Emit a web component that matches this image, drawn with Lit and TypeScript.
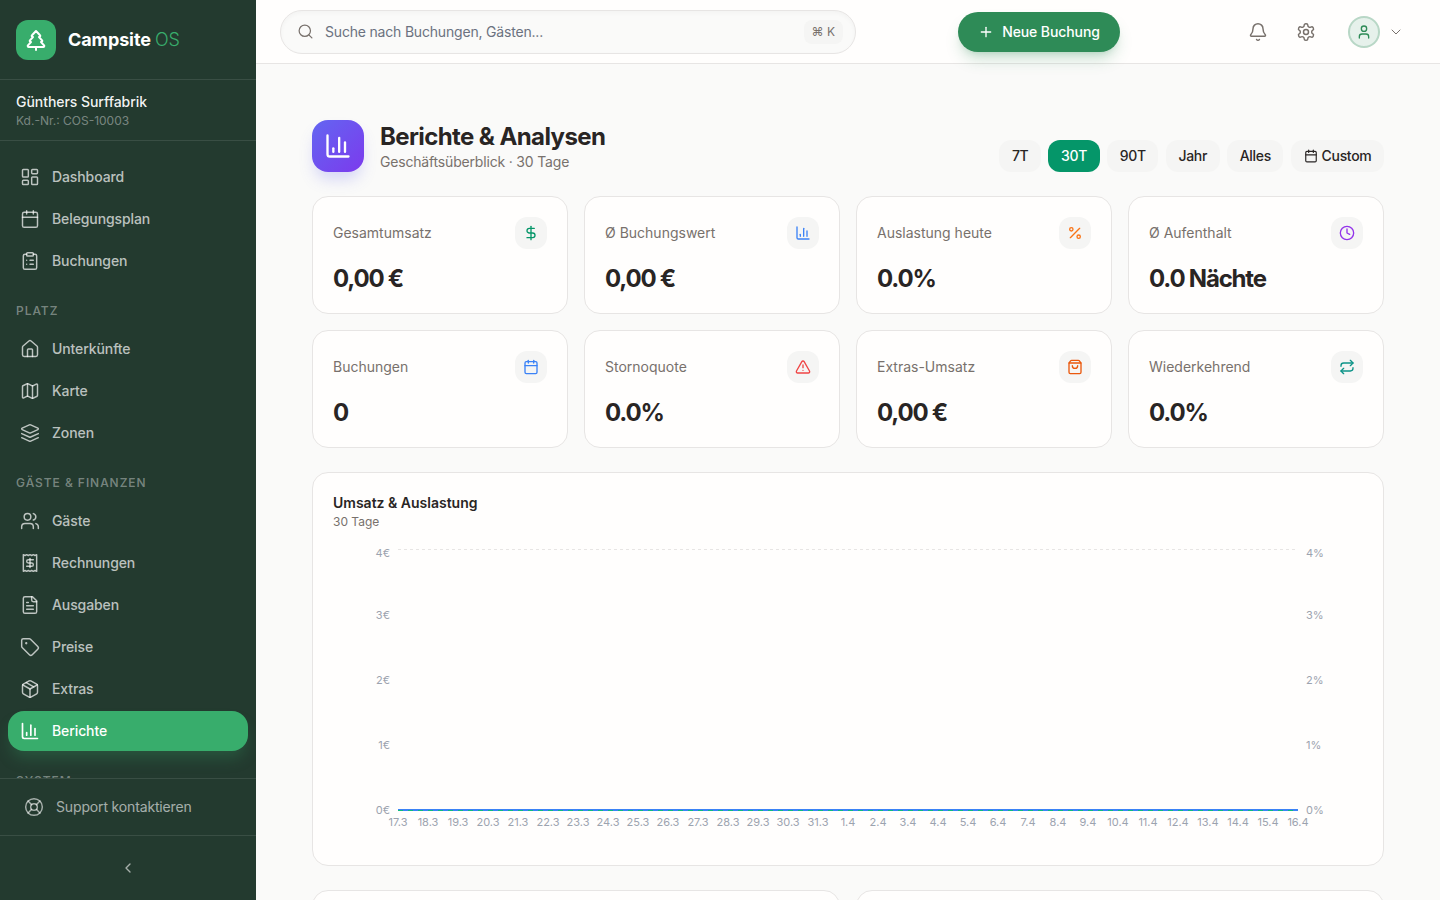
import { LitElement, html, css, svg, nothing } from 'lit';
import { customElement, state } from 'lit/decorators.js';
import { classMap } from 'lit/directives/class-map.js';

const icons: Record<string, unknown> = {
  dashboard: svg`<rect x="3" y="3" width="7" height="9" rx="1"/><rect x="14" y="3" width="7" height="5" rx="1"/><rect x="14" y="12" width="7" height="9" rx="1"/><rect x="3" y="16" width="7" height="5" rx="1"/>`,
  calendar: svg`<path d="M8 2v4"/><path d="M16 2v4"/><rect x="3" y="4" width="18" height="18" rx="2"/><path d="M3 10h18"/>`,
  clipboard: svg`<rect x="8" y="2" width="8" height="4" rx="1" ry="1"/><path d="M16 4h2a2 2 0 0 1 2 2v14a2 2 0 0 1-2 2H6a2 2 0 0 1-2-2V6a2 2 0 0 1 2-2h2"/><path d="M12 11h4"/><path d="M12 16h4"/><path d="M8 11h.01"/><path d="M8 16h.01"/>`,
  home: svg`<path d="M15 21v-8a1 1 0 0 0-1-1h-4a1 1 0 0 0-1 1v8"/><path d="M3 10a2 2 0 0 1 .709-1.528l7-5.999a2 2 0 0 1 2.582 0l7 5.999A2 2 0 0 1 21 10v9a2 2 0 0 1-2 2H5a2 2 0 0 1-2-2z"/>`,
  map: svg`<path d="M14.106 5.553a2 2 0 0 0 1.788 0l3.659-1.83A1 1 0 0 1 21 4.619v12.764a1 1 0 0 1-.553.894l-4.553 2.277a2 2 0 0 1-1.788 0l-4.212-2.106a2 2 0 0 0-1.788 0l-3.659 1.83A1 1 0 0 1 3 19.381V6.618a1 1 0 0 1 .553-.894l4.553-2.277a2 2 0 0 1 1.788 0z"/><path d="M15 5.764v15"/><path d="M9 3.236v15"/>`,
  layers: svg`<path d="M12.83 2.18a2 2 0 0 0-1.66 0L2.6 6.08a1 1 0 0 0 0 1.83l8.58 3.91a2 2 0 0 0 1.66 0l8.58-3.9a1 1 0 0 0 0-1.83Z"/><path d="M22 17.65l-9.17 4.16a2 2 0 0 1-1.66 0L2 17.65"/><path d="M22 12.65l-9.17 4.16a2 2 0 0 1-1.66 0L2 12.65"/>`,
  users: svg`<path d="M16 21v-2a4 4 0 0 0-4-4H6a4 4 0 0 0-4 4v2"/><circle cx="9" cy="7" r="4"/><path d="M22 21v-2a4 4 0 0 0-3-3.87"/><path d="M16 3.13a4 4 0 0 1 0 7.75"/>`,
  receipt: svg`<path d="M4 2v20l2-1 2 1 2-1 2 1 2-1 2 1 2-1 2 1V2l-2 1-2-1-2 1-2-1-2 1-2-1-2 1Z"/><path d="M16 8h-6a2 2 0 1 0 0 4h4a2 2 0 1 1 0 4H8"/><path d="M12 17.5v-11"/>`,
  file: svg`<path d="M15 2H6a2 2 0 0 0-2 2v16a2 2 0 0 0 2 2h12a2 2 0 0 0 2-2V7Z"/><path d="M14 2v4a2 2 0 0 0 2 2h4"/><path d="M10 9H8"/><path d="M16 13H8"/><path d="M16 17H8"/>`,
  tag: svg`<path d="M12.586 2.586A2 2 0 0 0 11.172 2H4a2 2 0 0 0-2 2v7.172a2 2 0 0 0 .586 1.414l8.704 8.704a2.426 2.426 0 0 0 3.42 0l6.58-6.58a2.426 2.426 0 0 0 0-3.42z"/><circle cx="7.5" cy="7.5" r=".5" fill="currentColor"/>`,
  package: svg`<path d="M11 21.73a2 2 0 0 0 2 0l7-4A2 2 0 0 0 21 16V8a2 2 0 0 0-1-1.73l-7-4a2 2 0 0 0-2 0l-7 4A2 2 0 0 0 3 8v8a2 2 0 0 0 1 1.73z"/><path d="M12 22V12"/><path d="M3.29 7 12 12l8.71-5"/><path d="M7.5 4.27l9 5.15"/>`,
  chart: svg`<path d="M3 3v16a2 2 0 0 0 2 2h16"/><path d="M18 17V9"/><path d="M13 17V5"/><path d="M8 17v-3"/>`,
  buoy: svg`<circle cx="12" cy="12" r="10"/><path d="m4.93 4.93 4.24 4.24"/><path d="m14.83 9.17 4.24-4.24"/><path d="m14.83 14.83 4.24 4.24"/><path d="m9.17 14.83-4.24 4.24"/><circle cx="12" cy="12" r="4"/>`,
  left: svg`<path d="m15 18-6-6 6-6"/>`,
  down: svg`<path d="m6 9 6 6 6-6"/>`,
  search: svg`<path d="m21 21-4.3-4.3"/><circle cx="11" cy="11" r="8"/>`,
  plus: svg`<path d="M5 12h14"/><path d="M12 5v14"/>`,
  bell: svg`<path d="M10.268 21a2 2 0 0 0 3.464 0"/><path d="M3.262 15.326A1 1 0 0 0 4 17h16a1 1 0 0 0 .74-1.673C19.41 13.956 18 12.499 18 8A6 6 0 0 0 6 8c0 4.499-1.411 5.956-2.738 7.326"/>`,
  gear: svg`<path d="M12.22 2h-.44a2 2 0 0 0-2 2v.18a2 2 0 0 1-1 1.73l-.43.25a2 2 0 0 1-2 0l-.15-.08a2 2 0 0 0-2.73.73l-.22.38a2 2 0 0 0 .73 2.73l.15.1a2 2 0 0 1 1 1.72v.51a2 2 0 0 1-1 1.74l-.15.09a2 2 0 0 0-.73 2.73l.22.38a2 2 0 0 0 2.73.73l.15-.08a2 2 0 0 1 2 0l.43.25a2 2 0 0 1 1 1.73V20a2 2 0 0 0 2 2h.44a2 2 0 0 0 2-2v-.18a2 2 0 0 1 1-1.73l.43-.25a2 2 0 0 1 2 0l.15.08a2 2 0 0 0 2.73-.73l.22-.39a2 2 0 0 0-.73-2.73l-.15-.08a2 2 0 0 1-1-1.74v-.5a2 2 0 0 1 1-1.74l.15-.09a2 2 0 0 0 .73-2.73l-.22-.38a2 2 0 0 0-2.73-.73l-.15.08a2 2 0 0 1-2 0l-.43-.25a2 2 0 0 1-1-1.73V4a2 2 0 0 0-2-2z"/><circle cx="12" cy="12" r="3"/>`,
  user: svg`<path d="M19 21v-2a4 4 0 0 0-4-4H9a4 4 0 0 0-4 4v2"/><circle cx="12" cy="7" r="4"/>`,
  dollar: svg`<line x1="12" x2="12" y1="2" y2="22"/><path d="M17 5H9.5a3.5 3.5 0 0 0 0 7h5a3.5 3.5 0 0 1 0 7H6"/>`,
  percent: svg`<line x1="19" x2="5" y1="5" y2="19"/><circle cx="6.5" cy="6.5" r="2.5"/><circle cx="17.5" cy="17.5" r="2.5"/>`,
  clock: svg`<circle cx="12" cy="12" r="10"/><polyline points="12 6 12 12 16 14"/>`,
  alert: svg`<path d="m21.73 18-8-14a2 2 0 0 0-3.48 0l-8 14A2 2 0 0 0 4 21h16a2 2 0 0 0 1.73-3"/><path d="M12 9v4"/><path d="M12 17h.01"/>`,
  bag: svg`<path d="M16 10a4 4 0 0 1-8 0"/><path d="M3.103 6.034h17.794"/><path d="M3.4 5.467a2 2 0 0 0-.4 1.2V20a2 2 0 0 0 2 2h14a2 2 0 0 0 2-2V6.667a2 2 0 0 0-.4-1.2l-2.1-2.8A2 2 0 0 0 17 2H7a2 2 0 0 0-1.6.8z"/>`,
  repeat: svg`<path d="m17 2 4 4-4 4"/><path d="M3 11v-1a4 4 0 0 1 4-4h14"/><path d="m7 22-4-4 4-4"/><path d="M21 13v1a4 4 0 0 1-4 4H3"/>`,
  tree: svg`<path d="m17 14 3 3.3a1 1 0 0 1-.7 1.7H4.7a1 1 0 0 1-.7-1.7L7 14h-.3a1 1 0 0 1-.7-1.7L9 9h-.2A1 1 0 0 1 8 7.3L12 3l4 4.3a1 1 0 0 1-.8 1.7H15l3 3.3a1 1 0 0 1-.7 1.7H17Z"/><path d="M12 22v-3"/>`,
};

const icon = (name: string, size = 20, width = 2) => html`<svg
  class="icon"
  width=${size}
  height=${size}
  viewBox="0 0 24 24"
  fill="none"
  stroke="currentColor"
  stroke-width=${width}
  stroke-linecap="round"
  stroke-linejoin="round"
>${icons[name]}</svg>`;

const navGroups = [
  {
    title: '',
    items: [
      ['dashboard', 'Dashboard'],
      ['calendar', 'Belegungsplan'],
      ['clipboard', 'Buchungen'],
    ],
  },
  {
    title: 'Platz',
    items: [
      ['home', 'Unterkünfte'],
      ['map', 'Karte'],
      ['layers', 'Zonen'],
    ],
  },
  {
    title: 'Gäste & Finanzen',
    items: [
      ['users', 'Gäste'],
      ['receipt', 'Rechnungen'],
      ['file', 'Ausgaben'],
      ['tag', 'Preise'],
      ['package', 'Extras'],
      ['chart', 'Berichte'],
    ],
  },
];

const kpis = [
  { label: 'Gesamtumsatz', value: '0,00 €', icon: 'dollar', tone: 'green' },
  { label: 'Ø Buchungswert', value: '0,00 €', icon: 'chart', tone: 'blue' },
  { label: 'Auslastung heute', value: '0.0%', icon: 'percent', tone: 'amber' },
  { label: 'Ø Aufenthalt', value: '0.0 Nächte', icon: 'clock', tone: 'violet' },
  { label: 'Buchungen', value: '0', icon: 'calendar', tone: 'blue' },
  { label: 'Stornoquote', value: '0.0%', icon: 'alert', tone: 'red' },
  { label: 'Extras-Umsatz', value: '0,00 €', icon: 'bag', tone: 'orange' },
  { label: 'Wiederkehrend', value: '0.0%', icon: 'repeat', tone: 'teal' },
];

const ranges = ['7T', '30T', '90T', 'Jahr', 'Alles'];

const days = [
  ...Array.from({ length: 15 }, (_, i) => `${17 + i}.3`),
  ...Array.from({ length: 16 }, (_, i) => `${1 + i}.4`),
];

const yTicks = [
  [553, '4'],
  [615, '3'],
  [680, '2'],
  [745, '1'],
  [810, '0'],
] as const;

@customElement('app-root')
export class AppRoot extends LitElement {
  @state() range = '30T';

  static styles = css`
    :host {
      display: block;
      height: 900px;
      overflow: hidden;
      font-family: Inter, 'Noto Sans', sans-serif;
      color: #292524;
    }
    .icon {
      display: block;
      flex: none;
    }
    .app {
      display: flex;
      height: 900px;
      background: #fafaf9;
    }

    .sidebar {
      width: 256px;
      flex: none;
      display: flex;
      flex-direction: column;
      background: #233a2f;
      color: #fff;
    }
    .brand {
      height: 80px;
      box-sizing: border-box;
      flex: none;
      display: flex;
      align-items: center;
      gap: 12px;
      padding: 0 16px;
      border-bottom: 1px solid rgba(255, 255, 255, 0.1);
    }
    .logo {
      width: 40px;
      height: 40px;
      border-radius: 12px;
      background: #38ad6c;
      display: flex;
      align-items: center;
      justify-content: center;
    }
    .brand-name {
      font-size: 18px;
      font-weight: 700;
      letter-spacing: -0.1px;
    }
    .brand-name span {
      font-weight: 300;
      color: #38ad6c;
    }
    .customer {
      height: 61px;
      box-sizing: border-box;
      flex: none;
      padding: 12px 16px;
      border-bottom: 1px solid rgba(255, 255, 255, 0.1);
    }
    .customer-name {
      font-size: 14px;
      line-height: 20px;
      font-weight: 500;
      letter-spacing: -0.05px;
      color: rgba(255, 255, 255, 0.95);
    }
    .customer-id {
      margin-top: 1px;
      font-size: 12px;
      line-height: 16px;
      color: rgba(255, 255, 255, 0.4);
    }
    .nav {
      flex: 1;
      min-height: 0;
      overflow: hidden;
      padding: 16px 8px 0;
    }
    .nav-group {
      margin-bottom: 22px;
    }
    .nav-title {
      height: 16px;
      line-height: 16px;
      margin-bottom: 10px;
      padding: 0 8px;
      font-size: 12px;
      font-weight: 500;
      letter-spacing: 0.96px;
      text-transform: uppercase;
      color: rgba(255, 255, 255, 0.4);
    }
    .nav-clipped {
      height: 40px;
    }
    .nav-list {
      display: flex;
      flex-direction: column;
      gap: 2px;
    }
    .nav-item {
      height: 40px;
      display: flex;
      align-items: center;
      gap: 12px;
      padding: 0 12px;
      border-radius: 16px;
      font-size: 14px;
      font-weight: 500;
      letter-spacing: -0.1px;
      color: rgba(255, 255, 255, 0.7);
    }
    .nav-item span {
      padding-bottom: 2px;
    }
    .nav-item.active {
      background: #38ad6c;
      color: #fff;
      box-shadow: 0 10px 15px -3px rgba(56, 173, 108, 0.25);
    }
    .support {
      height: 58px;
      box-sizing: border-box;
      flex: none;
      display: flex;
      align-items: center;
      gap: 12px;
      padding: 0 24px;
      border-top: 1px solid rgba(255, 255, 255, 0.1);
      border-bottom: 1px solid rgba(255, 255, 255, 0.1);
      font-size: 14px;
      letter-spacing: -0.15px;
      color: rgba(255, 255, 255, 0.6);
    }
    .support span {
      padding-bottom: 2px;
    }
    .collapse {
      height: 64px;
      flex: none;
      display: flex;
      align-items: center;
      justify-content: center;
      color: rgba(255, 255, 255, 0.6);
    }

    .body {
      flex: 1;
      min-width: 0;
      display: flex;
      flex-direction: column;
    }
    .topbar {
      height: 64px;
      box-sizing: border-box;
      flex: none;
      display: flex;
      align-items: center;
      padding: 0 24px;
      background: #fffefd;
      border-bottom: 1px solid #e7e5e4;
    }
    .search {
      width: 576px;
      height: 44px;
      box-sizing: border-box;
      display: flex;
      align-items: center;
      gap: 11px;
      padding: 0 12px 0 16px;
      border: 1px solid #e7e5e4;
      border-radius: 22px;
      background: #fafaf9;
      box-shadow: inset 0 2px 4px rgba(0, 0, 0, 0.03);
      color: #78716c;
    }
    .search-text {
      flex: 1;
      font-size: 14px;
      letter-spacing: -0.19px;
      color: #6b7280;
    }
    .kbd {
      height: 24px;
      padding: 0 8px;
      display: flex;
      align-items: center;
      border-radius: 8px;
      background: #f5f5f4;
      font-size: 12px;
      color: #78716c;
    }
    .new-btn {
      margin-left: 102px;
      width: 162px;
      height: 40px;
      box-sizing: border-box;
      display: flex;
      align-items: center;
      justify-content: center;
      gap: 8px;
      border-radius: 20px;
      background: #2e8b57;
      color: #fff;
      font-size: 14px;
      font-weight: 500;
      letter-spacing: -0.1px;
      box-shadow: 0 10px 15px -3px rgba(46, 139, 87, 0.25), 0 4px 6px -4px rgba(46, 139, 87, 0.25);
    }
    .top-actions {
      margin-left: auto;
      display: flex;
      align-items: center;
      color: #78716c;
    }
    .top-btn {
      width: 48px;
      display: flex;
      justify-content: center;
    }
    .avatar {
      margin-left: 18px;
      width: 32px;
      height: 32px;
      box-sizing: border-box;
      border-radius: 50%;
      border: 2px solid rgba(46, 139, 87, 0.25);
      background: #e6f1eb;
      color: #2e8b57;
      display: flex;
      align-items: center;
      justify-content: center;
    }
    .caret {
      margin: 0 12px 0 8px;
      color: #78716c;
    }

    .main {
      flex: 1;
      min-height: 0;
      overflow: hidden;
      padding: 56px 56px 0;
    }
    .page-head {
      display: flex;
      align-items: flex-end;
      justify-content: space-between;
      margin-bottom: 24px;
    }
    .page-title {
      display: flex;
      align-items: center;
      gap: 16px;
    }
    .page-icon {
      width: 52px;
      height: 52px;
      border-radius: 16px;
      background: linear-gradient(135deg, #6366f1, #7c3aed);
      box-shadow: 0 10px 15px -3px rgba(99, 102, 241, 0.25);
      color: #fff;
      display: flex;
      align-items: center;
      justify-content: center;
    }
    h1 {
      margin: 0;
      height: 32px;
      font-size: 24px;
      line-height: 34px;
      font-weight: 700;
      letter-spacing: -0.6px;
      color: #292524;
    }
    .page-sub {
      font-size: 14px;
      line-height: 20px;
      letter-spacing: -0.18px;
      color: #78716c;
    }
    .ranges {
      display: flex;
      gap: 7.5px;
    }
    .range {
      height: 32px;
      display: flex;
      align-items: center;
      gap: 4px;
      padding: 0 12.6px;
      border-radius: 12px;
      background: #f5f5f4;
      font-size: 14px;
      line-height: 18px;
      font-weight: 500;
      letter-spacing: -0.32px;
      color: #292524;
    }
    .range.on {
      background: #059669;
      color: #fff;
    }

    .kpi-grid {
      display: grid;
      grid-template-columns: repeat(4, 1fr);
      gap: 16px;
      margin-bottom: 24px;
    }
    .card {
      box-sizing: border-box;
      background: #fffefd;
      border: 1px solid #e7e5e4;
      border-radius: 16px;
    }
    .kpi {
      padding: 20px;
    }
    .kpi-top {
      display: flex;
      align-items: center;
      justify-content: space-between;
      margin-bottom: 12px;
    }
    .kpi-label {
      padding-bottom: 2px;
      font-size: 14px;
      color: #78716c;
    }
    .kpi-icon {
      width: 32px;
      height: 32px;
      border-radius: 12px;
      background: #f5f5f4;
      display: flex;
      align-items: center;
      justify-content: center;
    }
    .kpi-value {
      height: 32px;
      font-size: 24px;
      line-height: 35px;
      font-weight: 700;
      letter-spacing: -1.2px;
      color: #292524;
    }
    .green {
      color: #059669;
    }
    .blue {
      color: #3b82f6;
    }
    .amber {
      color: #f97316;
    }
    .violet {
      color: #9333ea;
    }
    .red {
      color: #ef4444;
    }
    .orange {
      color: #ea580c;
    }
    .teal {
      color: #0d9488;
    }

    .chart-card {
      height: 394px;
      padding: 20px;
      margin-bottom: 24px;
    }
    .chart-title {
      font-size: 14px;
      line-height: 20px;
      font-weight: 600;
      color: #292524;
    }
    .chart-sub {
      margin-top: 1px;
      font-size: 12px;
      line-height: 16px;
      color: #78716c;
    }
    .chart {
      display: block;
      margin-top: 3px;
    }
    .chart text {
      font-family: Inter, 'Noto Sans', sans-serif;
      font-size: 11px;
      fill: #9ca3af;
      dominant-baseline: central;
    }
    .two-col {
      display: grid;
      grid-template-columns: 1fr 1fr;
      gap: 16px;
    }
    .stub {
      height: 320px;
    }
  `;

  private renderNav() {
    return navGroups.map(
      (group) => html`
        <div class="nav-group">
          ${group.title ? html`<div class="nav-title">${group.title}</div>` : nothing}
          <div class="nav-list">
            ${group.items.map(
              ([ic, label]) => html`
                <div class=${classMap({ 'nav-item': true, active: label === 'Berichte' })}>
                  ${icon(ic, 20, label === 'Berichte' ? 2 : 1.75)}<span>${label}</span>
                </div>
              `,
            )}
          </div>
        </div>
      `,
    );
  }

  private renderChart() {
    // page coordinates, the viewBox starts at the top left of the card content
    return html`<svg class="chart" width="1030" height="312" viewBox="333 533 1030 312">
      <line x1="398" x2="1298" y1="549.5" y2="549.5" stroke="#e7e5e4" stroke-dasharray="3 3" />
      ${yTicks.map(
        ([y, v]) => svg`
          <text x="390" y=${y} text-anchor="end">${v}€</text>
          <text x="1306" y=${y}>${v}%</text>
        `,
      )}
      ${days.map((d, i) => svg`<text x=${398 + i * 30} y="822" text-anchor="middle">${d}</text>`)}
      <line x1="398" x2="1298" y1="810" y2="810" stroke="#3b82f6" stroke-width="2" />
      <line x1="398" x2="1298" y1="810.5" y2="810.5" stroke="#10b981" stroke-width="1" stroke-dasharray="5 5" />
    </svg>`;
  }

  render() {
    return html`
      <div class="app">
        <aside class="sidebar">
          <div class="brand">
            <div class="logo">${icon('tree', 24)}</div>
            <div class="brand-name">Campsite <span>OS</span></div>
          </div>
          <div class="customer">
            <div class="customer-name">Günthers Surffabrik</div>
            <div class="customer-id">Kd.-Nr.: COS-10003</div>
          </div>
          <nav class="nav">
            ${this.renderNav()}
            <div class="nav-clipped"><div class="nav-title">System</div></div>
          </nav>
          <div class="support">${icon('buoy', 20, 1.75)}<span>Support kontaktieren</span></div>
          <div class="collapse">${icon('left', 16)}</div>
        </aside>

        <div class="body">
          <header class="topbar">
            <div class="search">
              ${icon('search', 17, 1.75)}
              <span class="search-text">Suche nach Buchungen, Gästen...</span>
              <span class="kbd">⌘ K</span>
            </div>
            <div class="new-btn">${icon('plus', 16)}<span>Neue Buchung</span></div>
            <div class="top-actions">
              <div class="top-btn">${icon('bell', 20, 1.75)}</div>
              <div class="top-btn">${icon('gear', 20, 1.75)}</div>
              <div class="avatar">${icon('user', 16)}</div>
              <div class="caret">${icon('down', 16, 1.5)}</div>
            </div>
          </header>

          <main class="main">
            <div class="page-head">
              <div class="page-title">
                <div class="page-icon">${icon('chart', 28)}</div>
                <div>
                  <h1>Berichte &amp; Analysen</h1>
                  <div class="page-sub">Geschäftsüberblick · 30 Tage</div>
                </div>
              </div>
              <div class="ranges">
                ${ranges.map(
                  (r) => html`<div class=${classMap({ range: true, on: r === this.range })}>${r}</div>`,
                )}
                <div class="range">${icon('calendar', 14)}<span>Custom</span></div>
              </div>
            </div>

            <div class="kpi-grid">
              ${kpis.map(
                (k) => html`
                  <div class="card kpi">
                    <div class="kpi-top">
                      <span class="kpi-label">${k.label}</span>
                      <span class=${`kpi-icon ${k.tone}`}>${icon(k.icon, 16)}</span>
                    </div>
                    <div class="kpi-value">${k.value}</div>
                  </div>
                `,
              )}
            </div>

            <section class="card chart-card">
              <div class="chart-title">Umsatz &amp; Auslastung</div>
              <div class="chart-sub">30 Tage</div>
              ${this.renderChart()}
            </section>

            <div class="two-col">
              <div class="card stub"></div>
              <div class="card stub"></div>
            </div>
          </main>
        </div>
      </div>
    `;
  }
}
